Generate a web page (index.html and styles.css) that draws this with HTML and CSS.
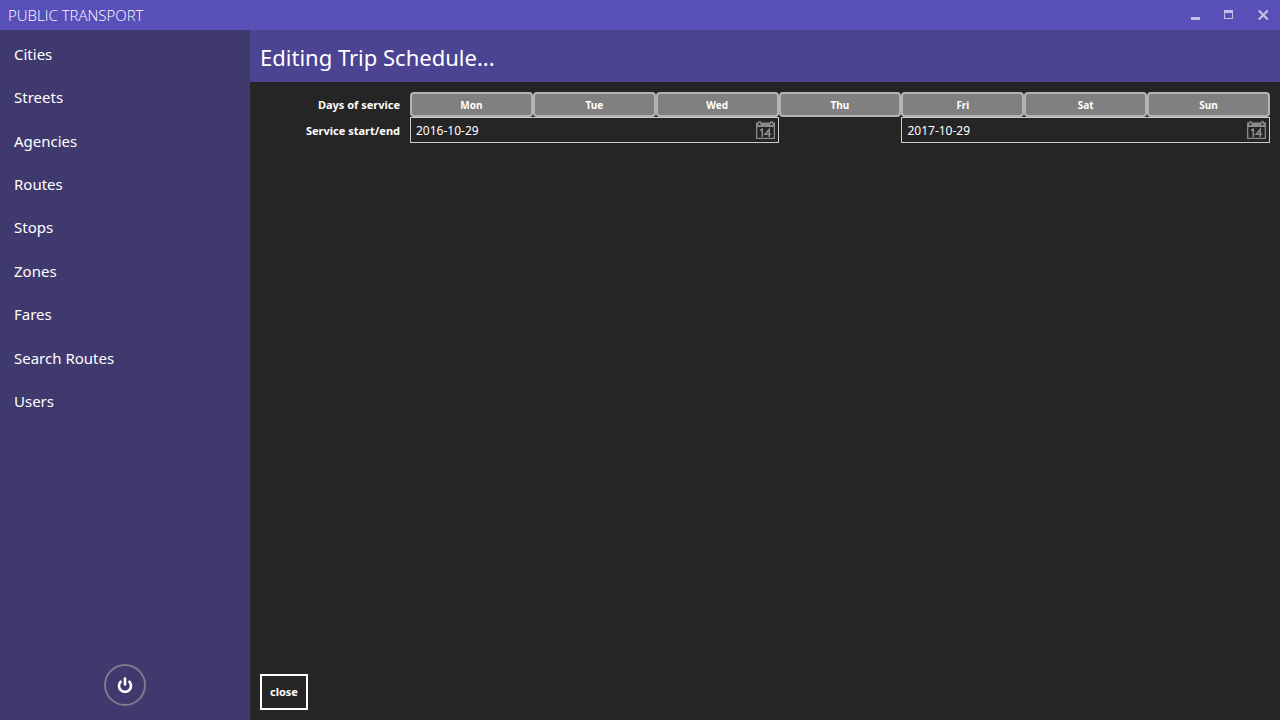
FILE: index.html
```html
<!DOCTYPE html>
<html lang="en">
<head>
<meta charset="utf-8">
<title>Public Transport</title>
<meta name="viewport" content="width=device-width, initial-scale=1">
<link rel="stylesheet" href="styles.css">
</head>
<body>
<svg class="sprite" aria-hidden="true">
  <symbol id="calendar" viewBox="0 0 19 18">
    <path fill="currentColor" fill-rule="evenodd" d="M0 1.500h2v1.500a1 1 0 0 0 1 1h1a1 1 0 0 0 1-1V1.500h9v1.500a1 1 0 0 0 1 1h1a1 1 0 0 0 1-1V1.500h2V18H0zM1.300 6v10.700h16.400V6z"/>
    <path fill="none" stroke="currentColor" stroke-width="1.200" d="M2.500 3V1.500a1 1 0 0 1 2 0V3M14.500 3V1.500a1 1 0 0 1 2 0V3"/>
    <path fill="none" stroke="currentColor" stroke-width="1.600" d="M4 9.500q1.700-.6 2.300-2V16M13.200 16V8.500L9.200 13.300H15.200"/>
  </symbol>
</svg>
<header class="titlebar">
  <span class="app-name">PUBLIC TRANSPORT</span>
  <div class="window-controls">
    <button type="button" class="window-button" aria-label="Minimize"><svg width="11" height="10" shape-rendering="crispEdges"><path fill="currentColor" d="M1 7h9v3H1z"/></svg></button>
    <button type="button" class="window-button" aria-label="Maximize"><svg width="11" height="10" shape-rendering="crispEdges"><path fill="currentColor" fill-rule="evenodd" d="M0 0h9v9H0zM1 3v5h7V3z"/></svg></button>
    <button type="button" class="window-button" aria-label="Close window"><svg width="11" height="10"><path fill="none" stroke="currentColor" stroke-width="2.200" d="M.8 .5l9 9M9.800 .5l-9 9"/></svg></button>
  </div>
</header>
<div class="workspace">
  <aside class="sidebar">
    <nav class="menu" aria-label="Main">
      <a href="#cities">Cities</a>
      <a href="#streets">Streets</a>
      <a href="#agencies">Agencies</a>
      <a href="#routes">Routes</a>
      <a href="#stops">Stops</a>
      <a href="#zones">Zones</a>
      <a href="#fares">Fares</a>
      <a href="#search">Search Routes</a>
      <a href="#users">Users</a>
    </nav>
    <button type="button" class="power" aria-label="Log out"><svg width="16" height="16" fill="none" stroke="currentColor"><path stroke-width="2.600" d="M4.300 4.100a6 6 0 1 0 7.400 0"/><path stroke-width="2.600" stroke-linecap="round" d="M8 1.500v6"/></svg></button>
  </aside>
  <main class="content">
    <h1 class="page-title">Editing Trip Schedule...</h1>
    <form class="editor">
      <div class="schedule">
        <span class="label" id="days-label">Days of service</span>
        <div class="days" role="group" aria-labelledby="days-label">
          <button type="button" class="day">Mon</button>
          <button type="button" class="day">Tue</button>
          <button type="button" class="day">Wed</button>
          <button type="button" class="day">Thu</button>
          <button type="button" class="day">Fri</button>
          <button type="button" class="day">Sat</button>
          <button type="button" class="day">Sun</button>
        </div>
        <label class="label" for="start">Service start/end</label>
        <div class="dates">
          <div class="date date-start">
            <input type="text" id="start" value="2016-10-29">
            <button type="button" class="pick" aria-label="Pick start date"><svg width="19" height="18"><use href="#calendar"/></svg></button>
          </div>
          <div class="date date-end">
            <input type="text" id="end" aria-label="Service end" value="2017-10-29">
            <button type="button" class="pick" aria-label="Pick end date"><svg width="19" height="18"><use href="#calendar"/></svg></button>
          </div>
        </div>
      </div>
      <button type="button" class="close">close</button>
    </form>
  </main>
</div>
</body>
</html>
```
FILE: styles.css
```css
* {
  box-sizing: border-box;
}

body {
  display: flex;
  flex-direction: column;
  min-height: 100vh;
  margin: 0;
  background: #252525;
  color: #fff;
  font-family: "Noto Sans", "Open Sans", sans-serif;
  font-size: 12px;
}

button,
input {
  margin: 0;
  padding: 0;
  border: 0;
  background: none;
  color: inherit;
  font: inherit;
}

svg {
  display: block;
}

.sprite {
  display: none;
}

.titlebar {
  display: flex;
  align-items: center;
  justify-content: space-between;
  height: 30px;
  padding-left: 8px;
  background: #594fb9;
}

.app-name {
  font-family: "Open Sans", "Noto Sans", sans-serif;
  font-size: 15px;
  font-weight: 300;
}

.window-controls {
  display: flex;
}

.window-button {
  display: grid;
  place-items: center;
  width: 34px;
  height: 30px;
  color: #c4bfe8;
}

.workspace {
  display: flex;
  flex: 1;
}

.sidebar {
  display: flex;
  flex-direction: column;
  justify-content: space-between;
  align-items: center;
  width: 250px;
  padding: 2px 0 14px;
  background: #3f396e;
}

.menu {
  display: grid;
  grid-auto-rows: 1fr;
  width: 100%;
  min-height: 391px;
}

.menu a {
  display: flex;
  align-items: center;
  padding: 0 14px;
  color: inherit;
  font-size: 15px;
  text-decoration: none;
}

.power {
  display: grid;
  place-items: center;
  width: 42px;
  height: 42px;
  border: 2px solid #7e7a90;
  border-radius: 50%;
}

.content {
  display: flex;
  flex: 1;
  flex-direction: column;
  min-width: 0;
}

.page-title {
  margin: 0;
  padding: 9px 10px 7px;
  background: #4c4492;
  font-size: 22px;
  font-weight: 400;
  line-height: 36px;
}

.editor {
  display: flex;
  flex: 1;
  flex-direction: column;
  justify-content: space-between;
  align-items: flex-start;
  padding: 10px;
}

.schedule {
  display: grid;
  grid-template-columns: 140px 1fr;
  column-gap: 10px;
  align-items: center;
  width: 100%;
}

.label {
  font-size: 11px;
  font-weight: 700;
  text-align: right;
}

.days,
.dates {
  display: grid;
  grid-template-columns: repeat(7, 1fr);
}

.day {
  height: 25px;
  border: 2px solid #b4b4b4;
  border-radius: 4px;
  background: #808080;
  font-size: 10px;
  font-weight: 700;
}

.date {
  display: flex;
  align-items: center;
  height: 26px;
  padding: 0 3px 0 5px;
  border: 1px solid #ccc;
}

.date-start {
  grid-column: 1 / span 3;
}

.date-end {
  grid-column: 5 / span 3;
}

.date input {
  flex: 1;
  min-width: 0;
  outline: 0;
}

.pick {
  color: #8a8a8a;
}

.close {
  padding: 8px;
  border: 2px solid #fff;
  font-size: 11px;
  font-weight: 700;
  line-height: 16px;
}
```
